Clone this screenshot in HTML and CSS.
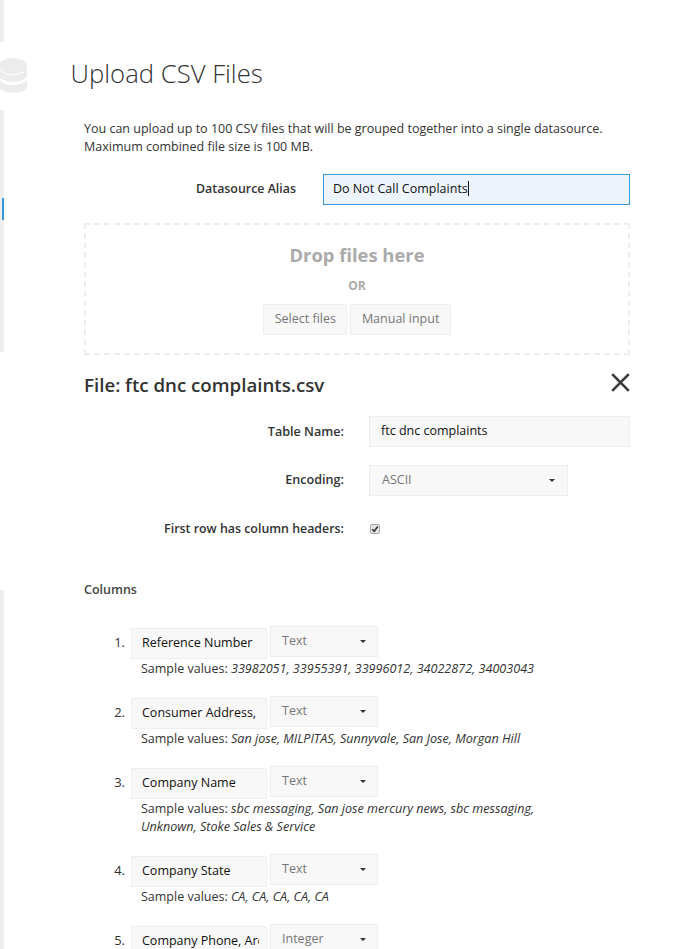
FILE: index.html
```html
<!DOCTYPE html>
<html lang="en">
<head>
<meta charset="utf-8">
<title>Upload CSV Files</title>
<link rel="stylesheet" href="styles.css">
</head>
<body>
<div class="page">
  <aside class="rail">
    <div class="strip s1"></div>
    <div class="gap g1"></div>
    <div class="strip s2"><span class="marker"></span></div>
    <div class="gap g2"></div>
    <div class="strip s3"></div>
    <svg class="db" viewBox="0 0 28 35" width="28" height="35" aria-hidden="true">
      <ellipse cx="13" cy="8" rx="14" ry="8" fill="#ececec"/>
      <path d="M-1 10c2 5 8 7 14 7s12-2 14-7v7c0 4-7 7-14 7s-14-3-14-7z" fill="#ececec"/>
      <path d="M-1 21c2 4 8 6 14 6s12-2 14-6v7c0 4-7 7-14 7s-14-3-14-7z" fill="#ececec"/>
    </svg>
  </aside>
  <main class="main">
    <h1 class="title">Upload CSV Files</h1>
    <div class="content">
      <p class="intro">You can upload up to 100 CSV files that will be grouped together into a single datasource.<br>Maximum combined file size is 100 MB.</p>
      <div class="alias-row">
        <label class="alias-label">Datasource Alias</label>
        <div class="alias-input">Do Not Call Complaints<span class="caret"></span></div>
      </div>
      <div class="drop">
        <div class="drop-title">Drop files here</div>
        <div class="drop-or">OR</div>
        <div class="drop-btns">
          <span class="btn">Select files</span>
          <span class="btn">Manual input</span>
        </div>
      </div>
      <div class="file-head">
        <h2 class="file-title">File: ftc dnc complaints.csv</h2>
        <svg class="close" viewBox="0 0 19 19" width="19" height="19" aria-hidden="true"><path d="M1.2 1.2L17.8 17.8M17.8 1.2L1.2 17.8" stroke="#3a3a3a" stroke-width="2.6" fill="none"/></svg>
      </div>
      <div class="form-row r1">
        <label class="form-label">Table Name:</label>
        <div class="field wide">ftc dnc complaints</div>
      </div>
      <div class="form-row r2">
        <label class="form-label">Encoding:</label>
        <div class="select enc"><span>ASCII</span><i class="arrow"></i></div>
      </div>
      <div class="form-row r3">
        <label class="form-label">First row has column headers:</label>
        <svg class="check" viewBox="0 0 10 10" width="10" height="10" aria-hidden="true"><rect x=".5" y=".5" width="9" height="9" rx="1.5" fill="#e4e4e4" stroke="#a8a8a8"/><path d="M2.3 5.2L4.2 7.2L7.8 2.6" stroke="#333" stroke-width="1.6" fill="none"/></svg>
      </div>
      <h3 class="columns-title">Columns</h3>
      <ol class="cols">
        <li class="col">
          <div class="col-line"><span class="num">1.</span><div class="name"><span class="name-text">Reference Number</span></div><div class="select type"><span>Text</span><i class="arrow"></i></div></div>
          <div class="sample">Sample values: <em>33982051, 33955391, 33996012, 34022872, 34003043</em></div>
        </li>
        <li class="col">
          <div class="col-line"><span class="num">2.</span><div class="name"><span class="name-text">Consumer Address, City</span></div><div class="select type"><span>Text</span><i class="arrow"></i></div></div>
          <div class="sample">Sample values: <em>San jose, MILPITAS, Sunnyvale, San Jose, Morgan Hill</em></div>
        </li>
        <li class="col">
          <div class="col-line"><span class="num">3.</span><div class="name"><span class="name-text">Company Name</span></div><div class="select type"><span>Text</span><i class="arrow"></i></div></div>
          <div class="sample">Sample values: <em>sbc messaging, San jose mercury news, sbc messaging,<br>Unknown, Stoke Sales &amp; Service</em></div>
        </li>
        <li class="col">
          <div class="col-line"><span class="num">4.</span><div class="name"><span class="name-text">Company State</span></div><div class="select type"><span>Text</span><i class="arrow"></i></div></div>
          <div class="sample">Sample values: <em>CA, CA, CA, CA, CA</em></div>
        </li>
        <li class="col">
          <div class="col-line"><span class="num">5.</span><div class="name"><span class="name-text">Company Phone, Area Code</span></div><div class="select type"><span>Integer</span><i class="arrow"></i></div></div>
        </li>
      </ol>
    </div>
  </main>
</div>
</body>
</html>
```
FILE: styles.css
```css
* { box-sizing: border-box; }
html, body { margin: 0; padding: 0; height: 949px; overflow: hidden; background: #fff; }
body { font-family: "Open Sans", "Liberation Sans", sans-serif; font-size: 12.5px; line-height: 18px; color: #333; }
.page { display: flex; height: 949px; overflow: hidden; }
.rail { position: relative; width: 4px; flex: none; display: flex; flex-direction: column; }
.strip { background: #eee; width: 4px; }
.s1 { height: 42px; }
.g1 { height: 68px; }
.s2 { height: 242px; padding-top: 88px; }
.g2 { height: 238px; }
.s3 { flex: 1; }
.marker { display: block; width: 2px; height: 22px; margin-left: 2px; background: #3498db; }
.db { position: absolute; left: 0; top: 58px; }
.main { flex: 1; min-width: 0; padding: 56px 60px 0 66.5px; }
.title { margin: 0; font-size: 25.7px; font-weight: 300; line-height: 36px; color: #333; }
.content { margin: 28px 0 0 13.5px; }
.intro { margin: 0; }
.alias-row { display: flex; align-items: center; margin-top: 18px; }
.alias-label { width: 212px; margin-top: -2px; text-align: right; font-weight: 600; font-size: 12.4px; }
.alias-input { margin-left: 27px; flex: 1; height: 31px; border: 1px solid #3498db; background: #edf4fc; color: #111; padding: 5px 9px; }
.caret { display: inline-block; width: 1px; height: 15px; background: #111; vertical-align: -3px; }
.drop { margin-top: 18px; height: 132px; border: 2px dashed #eee; text-align: center; padding-top: 16px; }
.drop-title { font-size: 18.4px; line-height: 28px; font-weight: 700; color: #aaa; }
.drop-or { margin-top: 9px; font-size: 12px; line-height: 16px; font-weight: 700; color: #aaa; }
.drop-btns { display: flex; justify-content: center; gap: 3px; margin-top: 10px; }
.btn { height: 31px; padding: 5px 10.5px; border: 1px solid #eee; border-radius: 2px; background: #f8f8f8; color: #777; }
.file-head { display: flex; justify-content: space-between; align-items: center; margin-top: 16px; height: 28px; }
.file-title { margin: 0; font-size: 18.7px; font-weight: 600; line-height: 28px; color: #333; }
.close { margin-top: -6px; }
.form-row { display: flex; align-items: center; }
.form-label { width: 260px; text-align: right; font-weight: 600; font-size: 12.4px; flex: none; }
.r1 { margin-top: 17px; }
.r2 { margin-top: 18px; }
.r1 .form-label, .r2 .form-label { font-size: 12.6px; }
.r2 .form-label { margin-top: -2px; }
.r3 { margin-top: 17px; height: 31px; }
.field { height: 31px; border: 1px solid #eee; background: #f8f8f8; padding: 5px 11px; color: #111; }
.wide { margin-left: 25px; flex: 1; }
.select { display: flex; justify-content: space-between; align-items: center; height: 31px; border: 1px solid #eee; background: #f8f8f8; color: #777; }
.enc { margin-left: 25px; width: 199px; padding: 0 12px; }
.enc span { margin-top: -2px; }
.arrow { width: 0; height: 0; border-left: 3px solid transparent; border-right: 3px solid transparent; border-top: 3px solid #333; }
.check { margin-left: 26px; }
.columns-title { margin: 37px 0 0; font-size: 12.5px; line-height: 18px; font-weight: 600; color: #444; }
.cols { list-style: none; margin: 0; padding: 0; }
.col { margin-top: 18px; }
.cols .col:first-child { margin-top: 27px; }
.col-line { display: flex; align-items: flex-start; }
.num { width: 47px; flex: none; padding: 7px 6px 0 0; text-align: right; color: #333; font-size: 13px; }
.name { width: 136px; height: 31px; margin-top: 2px; border: 1px solid #eee; background: #f8f8f8; color: #111; padding: 5px 7px 5px 10px; }
.name-text { display: block; overflow: hidden; white-space: nowrap; }
.type { width: 108px; margin-left: 3px; padding: 0 11px; }
.type span { margin-top: -2px; }
.sample { margin: 1px 0 0 57px; }
.sample em { font-size: 12.6px; }
```
